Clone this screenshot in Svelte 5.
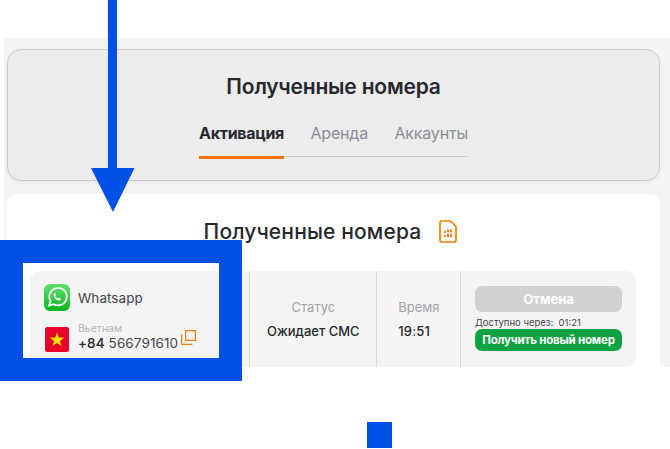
<script>
  const tabs = ["Активация", "Аренда", "Аккаунты"];
</script>

<div class="page">
  <div class="panel">
    <header class="head">
      <h1>Полученные номера</h1>
      <nav class="tabs">
        {#each tabs as tab, i}
          <span class="tab" class:active={i === 0}>{tab}</span>
        {/each}
      </nav>
    </header>

    <section class="card">
      <h2>
        Полученные номера
        <svg class="sim" width="18" height="23" viewBox="0 0 18 23" fill="none">
          <path d="M2.500 1h9L17 6.500V20a2 2 0 0 1-2 2H2.500a1.500 1.500 0 0 1-1.500-1.500V2.500A1.500 1.500 0 0 1 2.500 1z" stroke="#f57c00" stroke-width="1.700" fill="#fff" />
          <path d="M5 11h2v2H5zM8 9.500h2v3H8zM11 9.500h2v3h-2zM5 15h2v2H5zM8 14h2v3H8zM11 14h2v3h-2z" fill="#f57c00" />
        </svg>
      </h2>

      <div class="row">
        <div class="cell service">
          <div class="app">
            <svg width="26" height="27" viewBox="0 0 26 27">
              <defs>
                <linearGradient id="wa" x1="0" y1="0" x2="0" y2="1">
                  <stop offset="0" stop-color="#5fe06f" />
                  <stop offset="1" stop-color="#0bb51b" />
                </linearGradient>
              </defs>
              <rect width="26" height="27" rx="6" fill="url(#wa)" />
              <path d="M5.200 21.500l1.300-4.600a8.700 8.700 0 1 1 3.300 3.300z" fill="none" stroke="#fff" stroke-width="1.800" />
              <path d="M10.300 9.200c-.6.500-1 1.300-.8 2.200.5 2.400 2.700 4.600 5 5.100 1 .2 1.800-.2 2.300-.9.300-.4.200-.9-.2-1.100l-1.500-.8c-.3-.2-.7-.1-.9.200l-.4.500c-1.200-.5-2.100-1.400-2.600-2.500l.5-.5c.2-.2.300-.6.100-.9l-.7-1.400c-.2-.4-.6-.4-.8-.1z" fill="#fff" />
            </svg>
            <span class="app-name">Whatsapp</span>
          </div>
          <div class="phone">
            <svg class="flag" width="24" height="25" viewBox="0 0 24 25">
              <rect width="24" height="25" rx="2.500" fill="#e8002a" />
              <path d="M12 5.500l1.900 5.100h5.500l-4.400 3.300 1.600 5.300-4.600-3.200-4.600 3.200 1.600-5.300-4.400-3.300h5.500z" fill="#ffe000" />
            </svg>
            <div class="numbers">
              <span class="country">Вьетнам</span>
              <span class="number"><b>+84</b> 566791610</span>
            </div>
            <svg class="copy" width="15" height="15" viewBox="0 0 15 15" fill="none" stroke="#f57c00" stroke-width="1.200">
              <rect x="4.600" y="0.600" width="9.800" height="9.800" />
              <path d="M0.600 4.600v8.800a1 1 0 0 0 1 1h9.800" />
            </svg>
          </div>
        </div>

        <div class="cell status">
          <span class="label">Статус</span>
          <span class="value">Ожидает СМС</span>
        </div>

        <div class="cell time">
          <span class="label">Время</span>
          <span class="value">19:51</span>
        </div>

        <div class="cell actions">
          <button class="cancel">Отмена</button>
          <span class="wait">Доступно через:&nbsp; 01:21</span>
          <button class="renew">Получить новый номер</button>
        </div>
      </div>
    </section>
  </div>

  <!-- annotation drawn over the screenshot -->
  <svg class="arrow" width="44" height="212" viewBox="0 0 44 212">
    <path d="M17 0h9v168h17.500L22 212 0 168h17z" fill="#0050e6" />
  </svg>
  <div class="frame"></div>
  <div class="square"></div>
</div>

<style>
  :global(body) {
    margin: 0;
    background: #fff;
  }
  .page {
    position: relative;
    width: 670px;
    height: 449px;
    overflow: hidden;
    padding: 38px 0 0 4px;
    box-sizing: border-box;
    font-family: Inter, "Noto Sans", sans-serif;
    color: #26282e;
  }
  .panel {
    background: #f4f4f4;
    height: 329px;
    padding: 11px 10px 0 3px;
    box-sizing: border-box;
    display: flex;
    flex-direction: column;
    gap: 13px;
  }
  .head {
    height: 132px;
    box-sizing: border-box;
    background: #ececec;
    border: 1px solid #cbcbcb;
    border-radius: 14px;
    box-shadow: 0 2px 4px #0000000d;
    display: flex;
    flex-direction: column;
    align-items: center;
    padding-top: 23px;
  }
  h1 {
    margin: 0;
    font-size: 21px;
    line-height: 28px;
    font-weight: 600;
    letter-spacing: -0.2px;
  }
  .tabs {
    display: flex;
    gap: 26.500px;
    margin-top: 18px;
    border-bottom: 1px solid #cbcbcb;
    height: 37px;
  }
  .tab {
    font-size: 16px;
    line-height: 24px;
    color: #8b8e97;
    height: 35px;
    padding-top: 2px;
    letter-spacing: -0.2px;
  }
  .tab.active {
    color: #26282e;
    font-weight: 700;
    border-bottom: 3px solid #f57300;
    margin-bottom: -1px;
    letter-spacing: -0.3px;
  }
  .card {
    flex: 1;
    background: #fff;
    border-radius: 10px 10px 0 0;
    display: flex;
    flex-direction: column;
    align-items: center;
  }
  h2 {
    margin: 23px 6px 0 0;
    font-size: 21px;
    line-height: 30px;
    font-weight: 500;
    display: flex;
    align-items: center;
    gap: 18px;
    height: 30px;
    letter-spacing: 0.15px;
  }
  .sim {
    margin-top: -2px;
  }
  .row {
    align-self: flex-start;
    margin: 24px 0 0 23px;
    width: 606px;
    height: 96px;
    background: #f4f4f4;
    border-radius: 10px;
    display: flex;
  }
  .cell {
    display: flex;
    flex-direction: column;
    box-sizing: border-box;
    border-left: 1px solid #d6dcc4;
  }
  .service {
    width: 220px;
    border-left: 0;
    padding: 13px 0 0 14px;
  }
  .app {
    display: flex;
    align-items: center;
    gap: 8px;
  }
  .app-name {
    font-size: 13.500px;
    color: #44464c;
    letter-spacing: 0.05px;
  }
  .phone {
    display: flex;
    align-items: center;
    margin: 12px 0 0 1px;
  }
  .flag {
    margin-top: 3px;
  }
  .numbers {
    display: flex;
    flex-direction: column;
    margin-left: 9px;
  }
  .country {
    font-size: 10.500px;
    line-height: 11px;
    color: #b4b4b4;
  }
  .number {
    font-size: 13.500px;
    line-height: 18px;
    color: #44464c;
    letter-spacing: 0.1px;
  }
  .number b {
    color: #26282e;
    font-weight: 500;
  }
  .copy {
    margin: 0 0 1px 3px;
  }
  .status,
  .time {
    padding-top: 27px;
    gap: 6px;
  }
  .status {
    width: 127px;
    align-items: center;
  }
  .time {
    width: 84px;
    padding-left: 21px;
    align-items: flex-start;
  }
  .label {
    font-size: 13px;
    line-height: 18px;
    color: #a3a3a3;
  }
  .value {
    font-size: 13px;
    line-height: 18px;
    font-weight: 500;
    color: #26282e;
  }
  .time .value {
    letter-spacing: 0.2px;
  }
  .actions {
    flex: 1;
    padding: 15px 14px 0;
  }
  button {
    border: 0;
    padding: 0;
    width: 147px;
    color: #fff;
    font-family: inherit;
    font-weight: 700;
    display: block;
  }
  .cancel {
    height: 26px;
    border-radius: 7px;
    background: #d1d1d1;
    font-size: 13px;
  }
  .wait {
    font-size: 9.500px;
    line-height: 11px;
    margin-top: 5px;
    height: 12px;
    color: #44464c;
    white-space: nowrap;
  }
  .renew {
    height: 22px;
    border-radius: 7px;
    background: #0ea341;
    font-size: 11.500px;
    letter-spacing: -0.2px;
    white-space: nowrap;
  }
  .arrow {
    position: absolute;
    left: 91px;
    top: 0;
  }
  .frame {
    position: absolute;
    left: 0;
    top: 240px;
    width: 242px;
    height: 141px;
    box-sizing: border-box;
    border: 23px solid #0050e6;
  }
  .square {
    position: absolute;
    left: 367px;
    top: 422px;
    width: 25px;
    height: 26px;
    background: #0050e6;
  }
</style>
